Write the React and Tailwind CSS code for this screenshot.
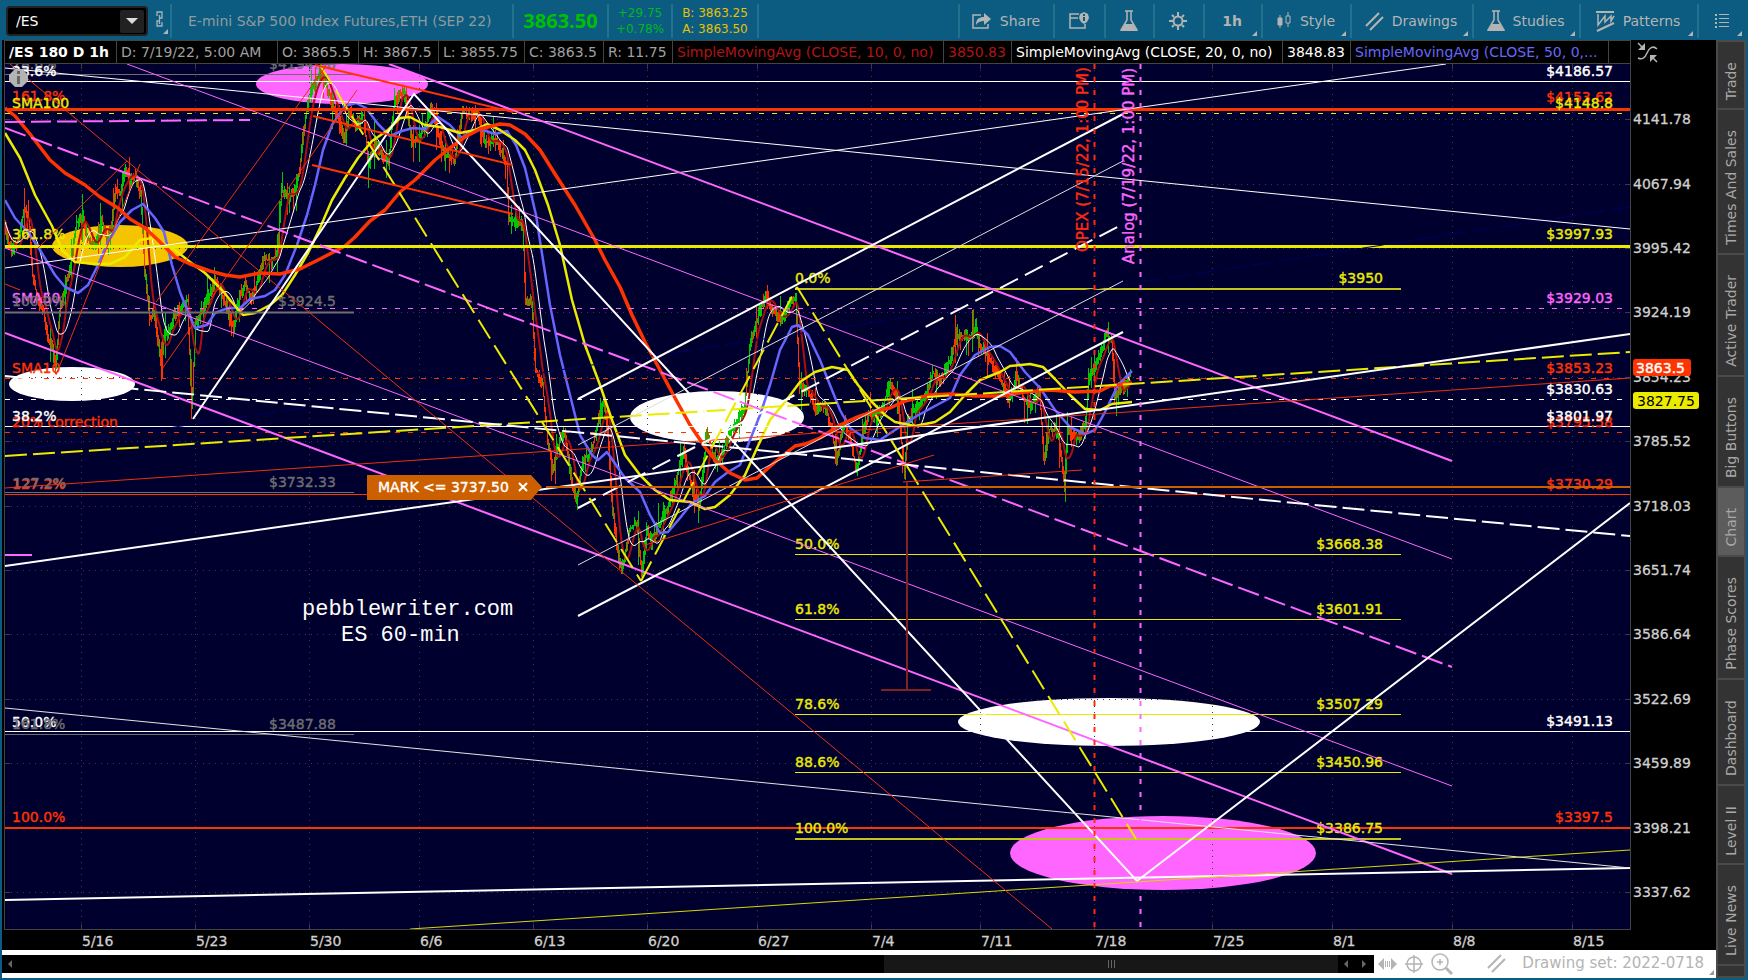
// src/App.jsx

const RED = "#ff3300";
const PINK = "#ff66ff";
const YELLOW = "#ebeb00";
const GREY = "#6e6e6e";
const NAVY = "#00005f";

// chart area, in chart units
const LEFT = 5;
const RIGHT = 1630;
const TOP = 64;
const BOTTOM = 929;

const priceAxis = [
  [119, "4141.78"],
  [184, "4067.94"],
  [248, "3995.42"],
  [312, "3924.19"],
  [377, "3854.23"],
  [441, "3785.52"],
  [506, "3718.03"],
  [570, "3651.74"],
  [634, "3586.64"],
  [699, "3522.69"],
  [763, "3459.89"],
  [828, "3398.21"],
  [892, "3337.62"],
];

const dateAxis = [
  [81, "5/16"],
  [195, "5/23"],
  [309, "5/30"],
  [419, "6/6"],
  [533, "6/13"],
  [647, "6/20"],
  [757, "6/27"],
  [871, "7/4"],
  [980, "7/11"],
  [1094, "7/18"],
  [1212, "7/25"],
  [1332, "8/1"],
  [1452, "8/8"],
  [1572, "8/15"],
];

// [cx, cy, rx, ry, fill]
const ellipses = [
  [342, 84, 86, 20, PINK],
  [120, 246, 68, 21, "#f5c400"],
  [72, 384, 63, 17, "#ffffff"],
  [717, 417, 87, 26, "#ffffff"],
  [1109, 722, 151, 24, "#ffffff"],
  [1163, 853, 153, 37, PINK],
];

// horizontal levels: [y, x1, x2, colour, width, dash]
const levels = [
  [74.5, LEFT, 354, GREY, 1],
  [81.5, LEFT, RIGHT, "#fff", 1],
  [109.5, LEFT, RIGHT, RED, 3],
  [113.5, LEFT, RIGHT, YELLOW, 1, "5 8"],
  [246.5, LEFT, RIGHT, YELLOW, 3],
  [308.5, LEFT, RIGHT, PINK, 1, "5 8"],
  [312.5, LEFT, 354, GREY, 2],
  [378.5, LEFT, RIGHT, RED, 1, "5 8"],
  [399.5, LEFT, RIGHT, "#fff", 1, "5 8"],
  [426.5, LEFT, RIGHT, "#fff", 1],
  [432.5, LEFT, RIGHT, RED, 1, "5 8"],
  [492.5, LEFT, 354, GREY, 1],
  [494.5, LEFT, RIGHT, RED, 1],
  [731.5, LEFT, RIGHT, "#fff", 1],
  [734.5, LEFT, 354, GREY, 1],
  [828, LEFT, RIGHT, RED, 2],
  [289, 795, 1401, "#c4c41a", 2],
  [554.5, 795, 1401, YELLOW, 1],
  [619.5, 795, 1401, YELLOW, 1],
  [714.5, 795, 1401, YELLOW, 1],
  [772.5, 795, 1401, YELLOW, 1],
  [839, 795, 1401, "#c4c41a", 2],
];

// drawn trend lines: [points, colour, width, dash]
const trends = [
  ["5,452 440,388 1240,267 1630,207", NAVY, 1, "22 6"],
  ["5,68 1630,229", "#fff", 1],
  ["5,268 1446,64", "#fff", 1],
  ["389,64 1452,461", PINK, 2],
  ["127,64 1452,559", PINK, 1],
  ["5,128 1452,667", PINK, 2, "22 6"],
  ["5,248 1452,786", PINK, 1],
  ["5,333 1452,874", PINK, 2],
  ["5,122 250,120", PINK, 2, "20 6"],
  ["5,555 32,555", PINK, 2],
  ["5,456 1630,352", YELLOW, 2, "22 6"],
  ["5,488 1630,378", "#ee300c", 1],
  ["5,376 1630,536", "#fff", 2, "22 6"],
  ["5,566 1630,334", "#fff", 2],
  ["578,399 1123,114", "#fff", 2],
  ["578,445 1123,161", "#ddd", 1],
  ["578,508 1123,224", "#fff", 2, "20 8"],
  ["578,565 1123,281", "#ddd", 1],
  ["578,616 1123,332", "#fff", 2],
  ["193,419 414,94 1137,881 1630,503", "#fff", 2],
  ["5,900 1630,868", "#fff", 2],
  ["410,929 1630,850", "#d8d800", 1],
  ["5,708 1630,868", "#e4e4e4", 1],
  ["10,64 1052,929", "#ee300c", 1],
  ["320,65 641,581", YELLOW, 2, "22 8"],
  ["641,581 797,287", YELLOW, 2, "22 8"],
  ["797,287 1136,839", YELLOW, 2, "22 8"],
  ["38,248 127,161", "#ee300c", 1],
  ["56,375 140,164", "#ee300c", 1],
  ["156,302 326,66", "#ee300c", 1],
  ["162,369 357,90", "#ee300c", 1],
  ["5,284 20,290", "#ee300c", 1],
  ["315,65 513,112", RED, 2],
  ["313,116 513,165", RED, 2],
  ["312,165 513,214", RED, 2],
  ["645,545 934,455", "#ee300c", 1],
  ["903,482 1082,470", "#ee300c", 1],
  ["907,482 907,690", "#84201e", 2],
  ["881,690 931,690", "#84201e", 2],
];

// level captions: [x, y, text, colour, anchor]
const captions = [
  [12, 69, "78.6%", GREY],
  [12, 76, "23.6%", "#fff"],
  [269, 69, "$4194.58", GREY],
  [12, 101, "161.8%", RED],
  [12, 108, "SMA100", YELLOW],
  [12, 239, "361.8%", YELLOW],
  [12, 303, "SMA50", PINK],
  [12, 306, "100.0%", GREY],
  [278, 306, "$3924.5", GREY],
  [12, 373, "SMA10", RED],
  [12, 427, "20% correction", RED],
  [12, 421, "38.2%", "#fff"],
  [12, 489, "127.2%", RED],
  [13, 488, "127.2%", GREY],
  [269, 487, "$3732.33", GREY],
  [12, 727, "50.0%", "#fff"],
  [12, 729, "161.8%", GREY],
  [269, 729, "$3487.88", GREY],
  [12, 822, "100.0%", RED],
  [1613, 76, "$4186.57", "#fff", "end"],
  [1613, 102, "$4153.62", RED, "end"],
  [1613, 108, "$4148.8", YELLOW, "end"],
  [1613, 239, "$3997.93", YELLOW, "end"],
  [1613, 303, "$3929.03", PINK, "end"],
  [1613, 373, "$3853.23", RED, "end"],
  [1613, 394, "$3830.63", "#fff", "end"],
  [1613, 427, "$3795.58", RED, "end"],
  [1613, 421, "$3801.97", "#fff", "end"],
  [1613, 489, "$3730.29", RED, "end"],
  [1613, 726, "$3491.13", "#fff", "end"],
  [1613, 822, "$3397.5", RED, "end"],
  [795, 283, "0.0%", YELLOW],
  [795, 549, "50.0%", YELLOW],
  [795, 614, "61.8%", YELLOW],
  [795, 709, "78.6%", YELLOW],
  [795, 767, "88.6%", YELLOW],
  [795, 833, "100.0%", YELLOW],
  [1383, 283, "$3950", YELLOW, "end"],
  [1383, 549, "$3668.38", YELLOW, "end"],
  [1383, 614, "$3601.91", YELLOW, "end"],
  [1383, 709, "$3507.29", YELLOW, "end"],
  [1383, 767, "$3450.96", YELLOW, "end"],
  [1383, 833, "$3386.75", YELLOW, "end"],
];

// swing points of the hourly price
const swings = [
  [5, 222], [8, 240], [12, 252], [18, 242], [25, 208], [29, 220], [33, 275], [38, 300], [44, 310], [48, 340],
  [52, 345], [56, 368], [60, 310], [65, 290], [70, 270], [77, 222], [83, 218], [88, 240], [96, 245], [102, 218],
  [107, 240], [112, 225], [116, 188], [121, 195], [126, 168], [131, 180], [136, 176], [141, 195], [145, 270],
  [150, 318], [155, 315], [161, 362], [165, 335], [170, 330], [175, 315], [182, 308], [188, 300], [192, 408],
  [196, 325], [203, 310], [210, 295], [215, 277], [222, 295], [228, 310], [234, 330], [238, 305], [245, 282],
  [252, 300], [258, 280], [264, 258], [272, 262], [278, 250], [282, 190], [288, 196], [295, 192], [300, 170],
  [304, 130], [309, 100], [314, 85], [320, 72], [327, 86], [333, 105], [341, 125], [344, 140], [350, 112],
  [356, 125], [364, 115], [369, 168], [375, 142], [382, 155], [389, 162], [394, 108], [400, 92], [406, 96],
  [412, 142], [418, 140], [424, 130], [432, 108], [438, 130], [445, 155], [455, 160], [463, 112], [470, 115],
  [478, 112], [484, 140], [490, 143], [496, 138], [503, 155], [507, 165], [509, 218], [516, 220], [523, 225],
  [526, 300], [532, 302], [536, 370], [543, 385], [548, 440], [553, 468], [560, 442], [565, 432], [572, 480],
  [577, 502], [583, 462], [592, 450], [599, 420], [604, 402], [608, 430], [612, 500], [618, 552], [622, 572],
  [630, 530], [637, 522], [642, 575], [647, 528], [652, 543], [660, 522], [668, 508], [676, 482], [684, 452],
  [692, 488], [700, 506], [707, 432], [715, 460], [722, 455], [730, 432], [737, 422], [745, 405], [751, 340],
  [757, 322], [766, 294], [773, 310], [782, 320], [790, 304], [796, 296], [800, 388], [808, 390], [816, 408],
  [825, 405], [832, 430], [837, 458], [845, 422], [852, 445], [857, 472], [864, 430], [870, 412], [876, 418],
  [884, 405], [890, 382], [898, 400], [905, 476], [908, 420], [915, 410], [925, 398], [933, 372], [940, 382],
  [950, 362], [957, 334], [963, 336], [970, 338], [976, 326], [980, 345], [990, 360], [998, 375], [1010, 400],
  [1018, 377], [1024, 400], [1032, 405], [1040, 392], [1044, 458], [1050, 430], [1058, 430], [1065, 486],
  [1068, 432], [1078, 438], [1086, 425], [1089, 382], [1095, 365], [1103, 348], [1106, 334], [1112, 340],
  [1115, 395], [1120, 390], [1127, 385], [1131, 372],
];

const sma50 =
  "5,200 15,218 28,232 40,250 55,275 65,287 78,293 88,285 98,265 108,242 120,222 132,210 143,204 155,218 164,232 172,265 180,292 188,312 195,328 207,325 215,313 228,308 240,308 250,299 265,296 275,290 285,275 297,245 307,215 315,185 323,150 332,125 345,106 356,103 366,108 378,124 390,136 402,131 413,128 425,129 438,117 450,125 462,138 472,130 483,130 495,134 507,131 516,145 525,168 536,215 543,260 550,305 560,355 570,395 580,435 592,455 598,460 607,452 616,465 625,478 640,492 650,515 660,533 668,532 680,518 692,503 705,496 715,482 728,472 740,465 750,440 760,415 770,385 780,350 792,327 798,325 808,335 820,360 830,385 840,410 850,428 865,438 880,440 895,430 915,417 935,406 950,398 960,375 975,355 990,347 1000,346 1010,352 1025,372 1040,388 1055,410 1070,427 1085,434 1095,430 1105,412 1118,385 1132,371";
const sma100 =
  "5,133 20,158 35,195 52,226 62,250 75,262 95,264 110,264 125,257 140,240 152,238 162,243 175,250 190,262 205,273 222,290 235,306 243,315 255,313 270,305 282,295 295,275 308,253 320,228 332,200 345,178 358,158 372,141 388,130 400,118 410,117 425,125 440,127 460,133 475,130 487,124 500,130 515,140 525,150 535,170 548,205 560,245 572,300 585,345 600,385 612,420 625,455 640,475 655,490 670,500 690,502 705,509 715,507 730,495 745,475 757,448 770,420 785,402 800,382 815,372 832,367 848,370 858,385 872,402 885,415 895,422 915,426 935,422 950,412 965,395 980,380 1000,372 1010,366 1030,364 1043,367 1055,379 1070,395 1085,409 1100,410 1112,404 1132,402";
const sma200 =
  "5,108 15,116 30,134 50,160 65,173 85,185 100,197 118,208 130,219 145,228 160,242 175,257 190,264 210,271 225,275 240,277 260,273 280,274 300,269 320,259 345,246 355,237 370,221 385,210 400,192 415,180 435,160 450,148 465,137 480,129 500,124 510,125 525,134 540,150 555,174 575,205 595,240 605,260 620,287 632,315 645,342 660,370 675,398 690,425 705,447 715,460 730,473 745,480 757,478 775,462 795,446 805,444 820,438 840,425 855,418 875,411 890,408 905,401 930,395 950,394 975,396 1000,396 1025,392 1050,390 1075,392 1100,391 1110,386 1132,383";

function interpolate(points) {
  const out = [];
  for (let i = 1; i < points.length; i++) {
    const [x0, y0] = points[i - 1];
    const [x1, y1] = points[i];
    for (let x = x0; x < x1; x++) out.push([x, y0 + ((y1 - y0) * (x - x0)) / (x1 - x0)]);
  }
  return out;
}

const closes = interpolate(swings);

function movingAvg(length) {
  return closes
    .map(([x], i) => {
      const part = closes.slice(Math.max(0, i - length + 1), i + 1);
      return `${x},${(part.reduce((sum, p) => sum + p[1], 0) / part.length).toFixed(1)}`;
    })
    .join(" ");
}

// one bar per hour, split into up and down paths
function buildBars() {
  let seed = 17;
  const rand = () => {
    seed = (seed * 16807) % 2147483647;
    return seed / 2147483647;
  };
  let up = "";
  let down = "";
  closes.forEach(([x, y], i) => {
    const next = closes[i + 1] ? closes[i + 1][1] : y;
    const reach = rand() > 0.84 ? 24 : 8;
    const hi = Math.round(Math.min(y, next) - rand() * reach);
    const lo = Math.round(Math.max(y, next) + rand() * reach);
    const bar = `M${x + 0.5} ${hi}V${lo}`;
    const rising = next < y - 1 ? rand() > 0.2 : next > y + 1 ? rand() > 0.8 : rand() > 0.5;
    if (rising) up += bar;
    else down += bar;
  });
  return { up, down };
}

const bars = buildBars();
const sma10 = movingAvg(10);
const sma20 = movingAvg(20);

export default function App() {
  return (
    <div className="min-h-screen bg-[#0b5c80] flex flex-col pb-0.5 font-['DejaVu_Sans',sans-serif] text-sm">
      <TopBar />
      <div className="flex flex-1 pl-0.5 pr-0.5">
        <main className="flex-1 min-w-0 flex flex-col bg-black">
          <InfoRow />
          <Chart />
          <BottomBar />
        </main>
        <SideTabs />
      </div>
    </div>
  );
}

/* ---------- top bar ---------- */

function TopBar() {
  return (
    <header className="h-10 flex items-stretch pt-1 pb-0.5 pr-0.5 text-[#b4b4b4]">
      <div className="w-[172px] flex items-center pl-1.5 gap-2 border-r-2 border-[#24708f]">
        <div className="w-[142px] h-[30px] flex items-center rounded-sm border-2 border-[#222] bg-black pl-2 pr-0.5">
          <input
            aria-label="Symbol"
            defaultValue="/ES"
            className="flex-1 min-w-0 bg-transparent text-white outline-none"
          />
          <button type="button" aria-label="Recent symbols" className="w-6 h-[23px] bg-[#222] rounded-xs flex items-center justify-center">
            <svg width="12" height="6" viewBox="0 0 12 6">
              <path d="M0 0h12L6 6z" fill="#ddd" />
            </svg>
          </button>
        </div>
        <button type="button" aria-label="Link symbol" className="relative w-3 h-7">
          <svg width="12" height="28" viewBox="0 0 12 28" fill="none" stroke="#a5b4bb" strokeWidth="1.3">
            <path d="M1 9V5h5v6H4M3 14H1v5h5v-4M3.500 8v9" />
            <path d="M12 22v5H7z" fill="#b4b4b4" stroke="none" />
          </svg>
        </button>
      </div>
      <div className="w-[342px] flex items-center pl-4 border-r-2 border-[#24708f] text-[#909a9e] whitespace-nowrap">
        E-mini S&amp;P 500 Index Futures,ETH (SEP 22)
      </div>
      <div className="w-[95px] flex items-center justify-center border-r-2 border-[#24708f] font-['Noto_Sans',sans-serif] text-xl font-bold text-[#00c000]">
        3863.50
      </div>
      <div className="w-16 flex flex-col items-center justify-center border-r-2 border-[#24708f] text-xs leading-4 text-[#00b81c]">
        <span>+29.75</span>
        <span>+0.78%</span>
      </div>
      <div className="w-[86px] flex flex-col items-center justify-center border-r-2 border-[#24708f] text-xs leading-4 text-[#e8c000]">
        <span>B: 3863.25</span>
        <span>A: 3863.50</span>
      </div>

      <nav className="ml-auto flex items-stretch">
        <ToolButton width="w-[95px]" label="Share">
          <svg width="21" height="18" viewBox="0 0 21 18">
            <path d="M10 3H2v13h15v-4" fill="none" stroke="#b4b4b4" strokeWidth="1.500" />
            <path d="M5 13c0-6 3-8 8-8V1l7 6-7 6V9c-4 0-6 1-8 4z" fill="#b4b4b4" />
          </svg>
        </ToolButton>
        <ToolButton width="w-[51px]" name="Notes">
          <svg width="20" height="18" viewBox="0 0 20 18">
            <path d="M10 2H1v14h15v-4M1 6h8" fill="none" stroke="#b4b4b4" strokeWidth="1.500" />
            <path d="M15 0l4 2 1 4-2 4-3 2-3-2-2-4 1-4z" fill="#b4b4b4" />
            <path d="M15 2v2M15 5v4" stroke="#0b5c80" strokeWidth="2" />
          </svg>
        </ToolButton>
        <ToolButton width="w-[49px]" name="Lab">
          <Flask />
        </ToolButton>
        <ToolButton width="w-[50px]" name="Settings">
          <svg width="20" height="20" viewBox="0 0 20 20" stroke="#b4b4b4" fill="none">
            <circle cx="10" cy="10" r="4.500" strokeWidth="2" />
            <path
              d="M10 1v4M10 15v4M1 10h4M15 10h4M4 4l2 2M14 14l2 2M16 4l-2 2M6 14l-2 2"
              strokeWidth="2"
            />
          </svg>
        </ToolButton>
        <ToolButton width="w-[58px]" label="1h" corner bold />
        <ToolButton width="w-[89px]" label="Style" corner>
          <svg width="16" height="18" viewBox="0 0 16 18" stroke="#b4b4b4">
            <path d="M4 3v13M12 0v4M12 11v4" />
            <path d="M2 6h4v7H2z" fill="#b4b4b4" />
            <path d="M10 4h4v7h-4z" fill="none" />
          </svg>
        </ToolButton>
        <ToolButton width="w-[122px]" label="Drawings" corner>
          <Slashes color="#b4b4b4" />
        </ToolButton>
        <ToolButton width="w-[107px]" label="Studies" corner>
          <Flask />
        </ToolButton>
        <ToolButton width="w-[118px]" label="Patterns" corner>
          <svg width="19" height="21" viewBox="0 0 19 21" fill="none" stroke="#b4b4b4" strokeWidth="1.500">
            <path d="M0 1h18" strokeWidth="2" />
            <path d="M2 3v11l7-9v6l6-6v5l3-5" />
            <path d="M1 20l17-8" strokeWidth="2" />
          </svg>
        </ToolButton>
        <ToolButton width="w-[49px]" name="Menu" corner>
          <svg width="14" height="14" viewBox="0 0 14 14" fill="#b4b4b4">
            <path d="M0 0h2v2H0zM4 0h10v1H4zM0 4h2v2H0zM4 4h10v1H4zM0 8h2v2H0zM4 8h10v1H4zM0 12h2v2H0zM4 12h10v1H4z" />
          </svg>
        </ToolButton>
      </nav>
    </header>
  );
}

function ToolButton({ width, label, name, corner = false, bold = false, children }) {
  return (
    <button
      type="button"
      aria-label={label || name}
      className={[
        "relative flex items-center justify-center gap-2 pr-0.5 border-l-2 border-[#24708f]",
        bold ? "font-bold" : "",
        width,
      ].join(" ")}
    >
      {children}
      {label ? <span>{label}</span> : null}
      {corner ? (
        <svg className="absolute right-1 bottom-0.5" width="5" height="5" viewBox="0 0 5 5">
          <path d="M5 0v5H0z" fill="#b4b4b4" />
        </svg>
      ) : null}
    </button>
  );
}

function Flask() {
  return (
    <svg width="18" height="22" viewBox="0 0 18 22">
      <path d="M5 1h8M7 1v9L1 20h16L11 10V1" fill="none" stroke="#b4b4b4" strokeWidth="1.500" />
      <path d="M5 14h8l4 7H1z" fill="#b4b4b4" />
    </svg>
  );
}

function Slashes({ color }) {
  return (
    <svg width="19" height="19" viewBox="0 0 19 19" stroke={color} strokeWidth="2">
      <path d="M1 14L14 1M5 18L18 5" />
    </svg>
  );
}

/* ---------- values above the chart ---------- */

function InfoRow() {
  return (
    <div className="h-6 flex items-stretch pl-0.5 text-[#a0a0a0] whitespace-nowrap">
      <div className="flex flex-1 min-w-0 items-stretch border-y border-l border-[#444]">
        <InfoCell width="w-28" className="font-bold text-white">/ES 180 D 1h</InfoCell>
        <InfoCell width="w-[161px]">D: 7/19/22, 5:00 AM</InfoCell>
        <InfoCell width="w-[81px]">O: 3865.5</InfoCell>
        <InfoCell width="w-20">H: 3867.5</InfoCell>
        <InfoCell width="w-[86px]">L: 3855.75</InfoCell>
        <InfoCell width="w-[79px]">C: 3863.5</InfoCell>
        <InfoCell width="w-[69px]">R: 11.75</InfoCell>
        <InfoCell width="w-[271px]" className="text-[#b01414]">SimpleMovingAvg (CLOSE, 10, 0, no)</InfoCell>
        <InfoCell width="w-[68px]" className="text-[#b01414]">3850.83</InfoCell>
        <InfoCell width="w-[271px]" className="text-white">SimpleMovingAvg (CLOSE, 20, 0, no)</InfoCell>
        <InfoCell width="w-[68px]" className="text-white">3848.83</InfoCell>
        <InfoCell width="w-[258px]" className="text-[#6666ff]">SimpleMovingAvg (CLOSE, 50, 0,...</InfoCell>
      </div>
      <div className="w-[86px] border-l border-[#444] flex items-center pl-1.5">
        <svg width="21" height="21" viewBox="0 0 21 21" fill="none" stroke="#b4b4b4" strokeWidth="1.500">
          <path d="M1 16c4 2 7 0 9-5s6-8 10-4" />
          <path d="M8 1v7H1zM13 13h7l-7 7z" fill="#b4b4b4" stroke="none" />
          <path d="M1 1l5 5M20 20l-5-5" />
        </svg>
      </div>
    </div>
  );
}

function InfoCell({ width, className = "", children }) {
  return (
    <div className={["flex items-center pl-1 border-r border-[#444] shrink-0", width, className].join(" ")}>
      {children}
    </div>
  );
}

/* ---------- chart ---------- */

function Chart() {
  return (
    <svg
      className="block w-full h-auto"
      viewBox="2 64 1714 886"
      role="img"
      aria-label="E-mini S&P 500 futures, hourly"
      fontSize="14"
    >
      <clipPath id="plot">
        <rect x={LEFT} y={TOP} width={RIGHT - LEFT} height={BOTTOM - TOP} />
      </clipPath>
      <rect x={LEFT} y={TOP} width={RIGHT - LEFT} height={BOTTOM - TOP} fill="#00002e" />

      <g clipPath="url(#plot)">
        {ellipses.map(([cx, cy, rx, ry, fill]) => (
          <ellipse key={`${cx}-${cy}`} cx={cx} cy={cy} rx={rx} ry={ry} fill={fill} />
        ))}

        {/* grid */}
        <g stroke="#3c3c40" strokeWidth="1">
          {priceAxis.map(([y]) => (
            <path key={y} d={`M${LEFT} ${y + 0.5}H${RIGHT}`} strokeDasharray="1 5" />
          ))}
          {dateAxis.map(([x]) => (
            <path key={x} d={`M${x + 0.5} ${TOP}V${BOTTOM}`} strokeDasharray="1 5" />
          ))}
          {priceAxis.map(([y]) => (
            <path key={y} d={`M${LEFT} ${y + 0.5}h5M${RIGHT} ${y + 0.5}h-5`} />
          ))}
          {dateAxis.map(([x]) => (
            <path key={x} d={`M${x + 0.5} ${TOP}v5M${x + 0.5} ${BOTTOM}v-5`} />
          ))}
        </g>

        {/* price and its averages */}
        <path d={bars.down} stroke={RED} strokeWidth="1" />
        <path d={bars.up} stroke="#00c800" strokeWidth="1" />
        <g fill="none" strokeLinejoin="round">
          <polyline points={sma10} stroke="#aa1010" strokeWidth="2" />
          <polyline points={sma20} stroke="#ffffff" strokeWidth="1" />
          <polyline points={sma50} stroke="#6666ff" strokeWidth="2.5" />
          <polyline points={sma100} stroke={YELLOW} strokeWidth="2.5" />
          <polyline points={sma200} stroke={RED} strokeWidth="3.5" />
        </g>

        {levels.map(([y, x1, x2, color, width, dash]) => (
          <path key={y} d={`M${x1} ${y}H${x2}`} stroke={color} strokeWidth={width} strokeDasharray={dash} />
        ))}

        {captions.map(([x, y, text, color, anchor]) => (
          <text key={`${x}-${y}`} x={x} y={y} fill={color} stroke={color} strokeWidth="0.4" textAnchor={anchor}>
            {text}
          </text>
        ))}

        {trends.map(([points, color, width, dash]) => (
          <polyline
            key={points}
            points={points}
            fill="none"
            stroke={color}
            strokeWidth={width}
            strokeDasharray={dash}
          />
        ))}

        {/* time markers */}
        <path d={`M1094.500 ${TOP}V${BOTTOM}`} stroke="#ff2a10" strokeWidth="2" strokeDasharray="5 8" />
        <path d={`M1140.500 ${TOP}V${BOTTOM}`} stroke={PINK} strokeWidth="2" strokeDasharray="5 8" />
        <g fontSize="15" strokeWidth="0.4">
          <text transform="translate(1088 252) rotate(-90)" fill="#ff2a10" stroke="#ff2a10">
            OPEX (7/15/22, 1:00 PM)
          </text>
          <text transform="translate(1134 264) rotate(-90)" fill={PINK} stroke={PINK}>
            Analog (7/19/22, 1:00 PM)
          </text>
        </g>

        <text x="302" y="615" fill="#fff" fontSize="22" fontFamily="'Liberation Mono', monospace">
          pebblewriter.com
        </text>
        <text x="341" y="641" fill="#fff" fontSize="22" fontFamily="'Liberation Mono', monospace">
          ES 60-min
        </text>

        {/* alert level and flag */}
        <path d={`M546 487H${RIGHT}`} stroke="#cc6000" strokeWidth="2" />
        <path d="M367 475h164l11 12-11 13H367z" fill="#cc6000" />
        <text x="378" y="492" fill="#fff" stroke="#fff" strokeWidth="0.4">
          MARK &lt;= 3737.50
        </text>
        <path d="M519 483l8 8M527 483l-8 8" stroke="#fff" strokeWidth="2" />

        {/* info badge */}
        <path d="M15 69h7l6 6v6l-6 6h-7l-6-6v-6z" fill="#b4b4b4" />
        <path d="M18.500 71v3M18.500 76v8" stroke="#666" strokeWidth="3" />
      </g>

      <path d={`M${LEFT - 0.5} ${TOP}V${BOTTOM + 0.5}H${RIGHT + 0.5}V${TOP}`} fill="none" stroke="#444" />

      <g fill="#cfcfcf" stroke="#cfcfcf" strokeWidth="0.3">
        {priceAxis.map(([y, label]) => (
          <text key={y} x="1633" y={y + 5}>
            {label}
          </text>
        ))}
        {dateAxis.map(([x, label]) => (
          <text key={x} x={x + 1} y="946">
            {label}
          </text>
        ))}
      </g>

      <rect x="1633" y="359" width="58" height="17" rx="3" fill={RED} />
      <text x="1636" y="373" fill="#fff" stroke="#fff" strokeWidth="0.4">
        3863.5
      </text>
      <rect x="1633" y="392" width="66" height="17" rx="3" fill={YELLOW} />
      <text x="1637" y="406" fill="#000">
        3827.75
      </text>
    </svg>
  );
}

/* ---------- scroll bar and drawing set ---------- */

function BottomBar() {
  return (
    <div className="h-7 shrink-0 bg-white flex items-center text-[#b4b4b4]">
      <div className="flex-1 min-w-0 h-[18px] bg-black flex items-center">
        <button type="button" aria-label="Scroll to start" className="w-4 flex justify-center">
          <Arrow d="M4 0v8L0 4z" />
        </button>
        <div className="flex-1" />
        <div className="w-[454px] h-full bg-[#171717] flex items-center justify-center gap-0.5">
          <span className="w-px h-2 bg-[#666]" />
          <span className="w-px h-2 bg-[#666]" />
          <span className="w-px h-2 bg-[#666]" />
        </div>
        <button type="button" aria-label="Scroll left" className="w-4 flex justify-center">
          <Arrow d="M4 0v8L0 4z" />
        </button>
        <button type="button" aria-label="Scroll right" className="w-5 flex justify-center">
          <Arrow d="M0 0v8l4-4z" />
        </button>
      </div>
      <div className="w-[342px] flex items-center pl-1">
        <button type="button" aria-label="Fit width">
          <svg width="19" height="12" viewBox="0 0 19 12" fill="#b4b4b4">
            <path d="M6 0v12L0 6zM13 0v12l6-6zM7 3h1v6H7zM9 3h1v6H9zM11 3h1v6h-1z" />
          </svg>
        </button>
        <button type="button" aria-label="Crosshair" className="ml-2">
          <svg width="18" height="18" viewBox="0 0 18 18" fill="none" stroke="#b4b4b4" strokeWidth="1.500">
            <circle cx="9" cy="9" r="7" />
            <path d="M9 0v18M0 9h18" />
          </svg>
        </button>
        <button type="button" aria-label="Zoom in" className="ml-2">
          <svg width="22" height="22" viewBox="0 0 22 22" fill="none" stroke="#b4b4b4" strokeWidth="1.500">
            <circle cx="9" cy="9" r="8" />
            <path d="M9 6v6M6 9h6" />
            <path d="M15 15l6 6" strokeWidth="3" />
          </svg>
        </button>
        <button type="button" className="ml-auto relative flex items-center gap-4 pr-3 text-[15px]">
          <Slashes color="#b4b4b4" />
          <span className="whitespace-nowrap">Drawing set: 2022-0718</span>
          <svg className="absolute right-0.5 bottom-0" width="5" height="5" viewBox="0 0 5 5">
            <path d="M5 0v5H0z" fill="#999" />
          </svg>
        </button>
      </div>
    </div>
  );
}

function Arrow({ d }) {
  return (
    <svg width="4" height="8" viewBox="0 0 4 8">
      <path d={d} fill="#666" />
    </svg>
  );
}

/* ---------- right side tabs ---------- */

function SideTabs() {
  const tabs = [
    "Trade",
    "Times And Sales",
    "Active Trader",
    "Big Buttons",
    "Chart",
    "Phase Scores",
    "Dashboard",
    "Level II",
    "Live News",
  ];
  return (
    <aside className="w-[30px] flex flex-col gap-0.5 bg-[#4a4a4a] border-2 border-[#4a4a4a] text-[#a8a8a8]">
      {tabs.map((tab) => (
        <button
          key={tab}
          type="button"
          className={[
            "w-full flex items-center justify-center pt-5 pb-2",
            tab === "Chart" ? "bg-[#5c5c5c]" : "bg-[#333]",
          ].join(" ")}
        >
          <span className="[writing-mode:vertical-rl] rotate-180 whitespace-nowrap">{tab}</span>
        </button>
      ))}
      <div className="flex-1 bg-[#333]" />
    </aside>
  );
}
